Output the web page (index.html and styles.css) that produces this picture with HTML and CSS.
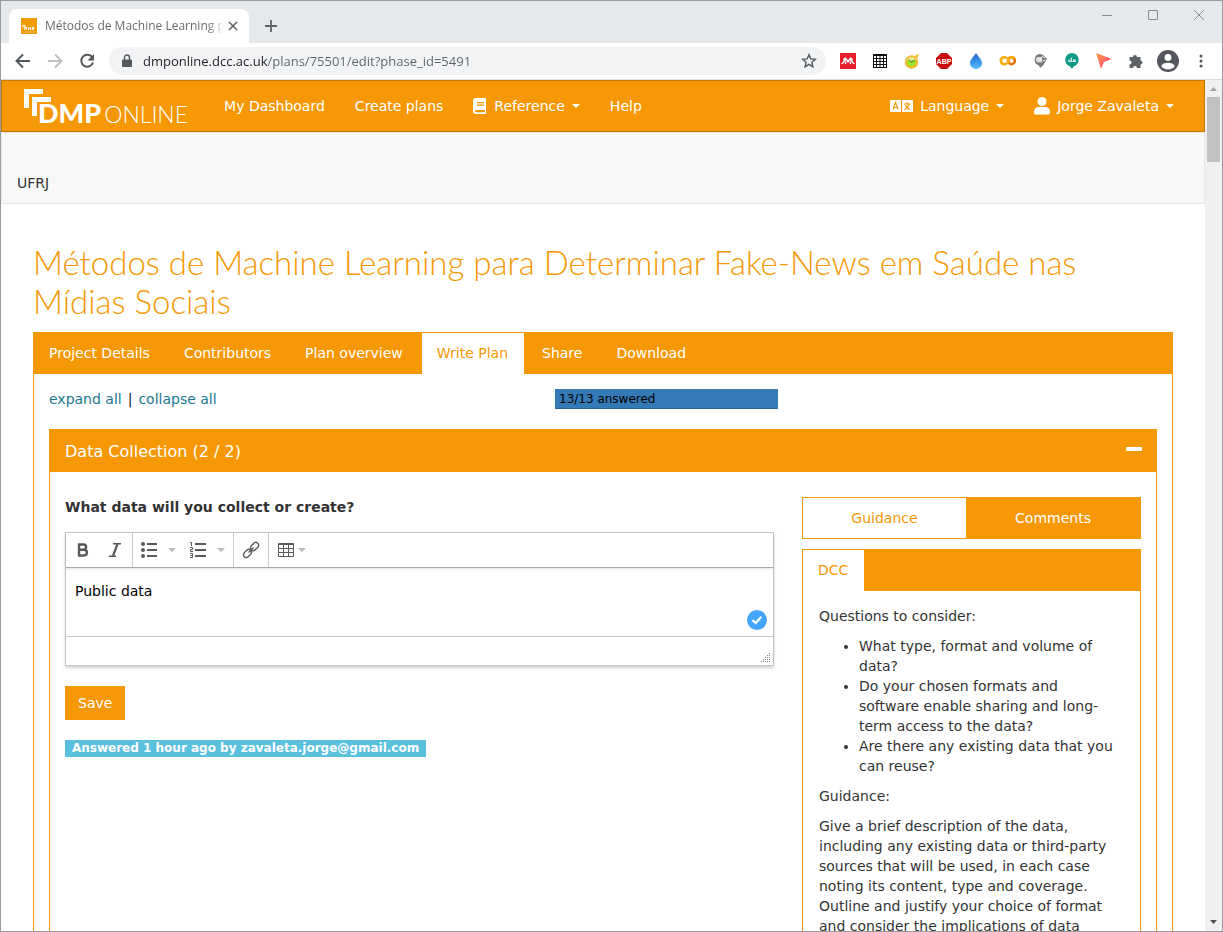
FILE: index.html
```html
<!DOCTYPE html>
<html lang="pt">
<head>
<meta charset="utf-8">
<title>Métodos de Machine Learning para Determinar Fake-News</title>
<link rel="stylesheet" href="styles.css">
</head>
<body>
<div class="window">
  <header class="tabstrip">
    <div class="browser-tab">
      <svg class="favicon" width="16" height="16" viewBox="0 0 16 16"><path fill="#ee9b00" d="M0 0h16v16H0z"/><path d="M1.500 9V7.500h3M3 10.500V9h2M4 12V9.500h1.500v2M7.500 12V9.500l1 1.500 1-1.500V12M11.500 12V9.500h1.500V11h-1.500" fill="none" stroke="#fff" stroke-width="1"/><path d="M4 14h10" stroke="#f8cf85" stroke-dasharray="2 .6"/></svg>
      <span class="browser-tab-title">Métodos de Machine Learning pa</span>
      <button class="plain" aria-label="Close tab"><svg width="10" height="10" viewBox="0 0 10 10"><path d="M1 1l8 8M9 1L1 9" stroke="#5f6368" stroke-width="1.600"/></svg></button>
    </div>
    <button class="plain new-tab" aria-label="New tab"><svg width="14" height="14" viewBox="0 0 14 14"><path d="M7 1v12M1 7h12" stroke="#5f6368" stroke-width="1.800"/></svg></button>
    <div class="window-controls">
      <button class="plain" aria-label="Minimize"><svg width="12" height="12" viewBox="0 0 12 12"><path d="M1 6.500h10" stroke="#8a8d91"/></svg></button>
      <button class="plain" aria-label="Maximize"><svg width="12" height="12" viewBox="0 0 12 12"><path d="M1.500 1.500h9v9h-9z" fill="none" stroke="#8a8d91"/></svg></button>
      <button class="plain" aria-label="Close"><svg width="12" height="12" viewBox="0 0 12 12"><path d="M1 1l10 10M11 1L1 11" stroke="#8a8d91"/></svg></button>
    </div>
  </header>

  <div class="toolbar">
    <div class="history">
      <button class="plain" aria-label="Back"><svg width="16" height="16" viewBox="0 0 16 16"><path d="M15 8H2M8 1.500L1.500 8 8 14.500" fill="none" stroke="#54575b" stroke-width="2"/></svg></button>
      <button class="plain" aria-label="Forward"><svg width="16" height="16" viewBox="0 0 16 16"><path d="M1 8h13M8 1.500L14.500 8 8 14.500" fill="none" stroke="#bcbec0" stroke-width="2"/></svg></button>
      <button class="plain" aria-label="Reload"><svg width="16" height="16" viewBox="0 0 16 16"><path d="M13.200 4.200A6 6 0 1 0 14 9.500" fill="none" stroke="#54575b" stroke-width="2"/><path d="M15 1v6.500H8.500z" fill="#54575b"/></svg></button>
    </div>
    <div class="address">
      <svg width="10" height="14" viewBox="0 0 10 14"><path d="M1 5.500h8a1 1 0 0 1 1 1V12a1 1 0 0 1-1 1H1a1 1 0 0 1-1-1V6.500a1 1 0 0 1 1-1z" fill="#54575b"/><path d="M2.500 6V3.500a2.500 2.500 0 0 1 5 0V6" fill="none" stroke="#54575b" stroke-width="1.400"/></svg>
      <input type="text" aria-label="Address" value="dmponline.dcc.ac.uk/plans/75501/edit?phase_id=5491">
      <button class="plain" aria-label="Bookmark"><svg width="16" height="16" viewBox="0 0 16 16"><path d="M8 1.800l1.800 4.100 4.500.4-3.400 3 1 4.400L8 11.400l-3.900 2.300 1-4.400-3.400-3 4.500-.4z" fill="none" stroke="#54575b" stroke-width="1.400"/></svg></button>
    </div>
    <div class="extensions">
      <svg width="16" height="16" viewBox="0 0 16 16"><path fill="#e61f2e" d="M0 0h16v16H0z"/><g fill="#fff"><circle cx="5.200" cy="6.300" r="1.800"/><circle cx="10.800" cy="6.300" r="1.800"/><circle cx="8" cy="8" r="1.500"/></g><path d="M1.500 10.500c2.500.3 1.500-3 3.500-3M14.500 10.500c-2.500.3-1.500-3-3.500-3M5.500 11V8.500M10.500 11V8.500" fill="none" stroke="#fff" stroke-width="1.400"/></svg>
      <svg width="16" height="16" viewBox="0 0 16 16"><path fill="#111" d="M1 1h14v14H1z"/><g fill="#fff"><path d="M2 3h2v2H2zM5 3h2.500v2H5zM8.500 3H11v2H8.500zM12 3h2v2h-2zM2 6h2v2H2zM5 6h2.500v2H5zM8.500 6H11v2H8.500zM12 6h2v2h-2zM2 9h2v2H2zM5 9h2.500v2H5zM8.500 9H11v2H8.500zM12 9h2v2h-2zM2 12h2v2H2zM5 12h2.500v2H5zM8.500 12H11v2H8.500zM12 12h2v2h-2z"/></g></svg>
      <svg width="16" height="16" viewBox="0 0 16 16"><path d="M11 3l3.500-1.500L13 5" fill="#f5c23b" stroke="#f5c23b"/><circle cx="7.500" cy="9" r="5.600" fill="#9be52a" stroke="#f3b82c" stroke-width="2.200"/><path d="M4.500 6l3 3 3.500-2.500" fill="none" stroke="#5c6b12" stroke-width="1.100"/><path d="M3 6.500a5 5 0 0 1 9 0l-4.500 2z" fill="#f4f7c8" opacity=".6"/></svg>
      <svg class="wide" width="18" height="16" viewBox="0 0 18 16"><path d="M6 0h6l5 5v6l-5 5H6l-5-5V5z" fill="#c70d0d"/><text class="abp" x="9" y="11" text-anchor="middle">ABP</text></svg>
      <svg width="16" height="16" viewBox="0 0 16 16"><defs><linearGradient id="drop" x2="0" y2="1"><stop stop-color="#1d62cf"/><stop offset="1" stop-color="#4fc0f8"/></linearGradient></defs><path d="M8 0c2 3.500 6 6.500 6 10.200A5.900 5.900 0 0 1 8 16a5.900 5.900 0 0 1-6-5.800C2 6.500 6 3.500 8 0z" fill="url(#drop)"/></svg>
      <svg class="wide" width="18" height="16" viewBox="0 0 18 16"><path d="M8 5.500A3.500 3.500 0 1 0 8 10" fill="none" stroke="#f9ab00" stroke-width="2.600"/><circle cx="12.500" cy="7.800" r="3.400" fill="none" stroke="#e8710a" stroke-width="2.600"/><path d="M10 10.200a3.400 3.400 0 0 1 4.900-4.800" fill="none" stroke="#f9ab00" stroke-width="2.600"/></svg>
      <svg width="16" height="16" viewBox="0 0 16 16"><path d="M7.500 1C10 1 11 2 12 3l3 3-2 3c-1 3-3 4-5 6l-1-2.500A5.900 5.900 0 0 1 7.500 1z" fill="#777"/><path d="M10 4H6.500a2.700 2.700 0 0 0 0 5.500H10z" fill="#ddd"/><path d="M7 6.500h3M10 3.500l2.500 1M10.500 8l3-1" stroke="#fff"/></svg>
      <svg width="16" height="16" viewBox="0 0 16 16"><path d="M8 0a6.800 6.800 0 0 1 1.500 13.400L8 16l-2-2.700A6.800 6.800 0 0 1 8 0z" fill="#0a9888"/><path d="M4 9V7l2-1 2-2 1 2 3 1v2H4z" fill="#c8ebe6"/><path d="M6 6v2M8.500 5v3" stroke="#0a9888"/></svg>
      <svg width="16" height="16" viewBox="0 0 16 16"><defs><linearGradient id="ptr" x2="1" y2="1"><stop stop-color="#ffa03a"/><stop offset="1" stop-color="#f7378c"/></linearGradient></defs><path d="M0 0l16 6-8 3-3 7z" fill="url(#ptr)"/></svg>
      <svg width="16" height="16" viewBox="0 0 16 16"><path d="M1.500 4H5a2 2 0 1 1 4 0h3.500v3.500a2 2 0 0 1 0 4V15H9a2 2 0 0 0-4 0H1.500v-3.500a2 2 0 0 0 0-4z" fill="#5f6368"/></svg>
      <svg class="avatar" width="22" height="22" viewBox="0 0 22 22"><circle cx="11" cy="11" r="11" fill="#54575d"/><circle cx="11" cy="7.500" r="3.400" fill="#fff"/><path d="M4.200 16.200c1.300-4.600 12.300-4.600 13.600 0-3 4.200-10.600 4.200-13.600 0z" fill="#fff"/></svg>
      <svg class="menu" width="4" height="14" viewBox="0 0 4 14"><g fill="#54575b"><circle cx="2" cy="2" r="1.500"/><circle cx="2" cy="7" r="1.500"/><circle cx="2" cy="12" r="1.500"/></g></svg>
    </div>
  </div>

  <div class="viewport">
    <div class="page">
      <nav class="navbar">
        <a class="logo" href="#">
          <svg class="logo-mark" width="28" height="28" viewBox="0 0 28 28"><path d="M0 0h19v5H5v14H0zM8 8h19v5H13v14H8z" fill="#fff"/></svg>
          <span class="logo-bold">DMP</span><span class="logo-thin">ONLINE</span>
        </a>
        <a href="#">My Dashboard</a>
        <a href="#">Create plans</a>
        <a href="#"><svg class="nav-icon" width="14" height="16" viewBox="0 0 14 16"><path d="M3 0h10v16H3a3 3 0 0 1-3-3V3a3 3 0 0 1 3-3zm0 12a1 1 0 0 0 0 2.200h9V12zM4 4v1.200h7V4zm0 2.500v1.200h7V6.500z" fill="#fff" fill-rule="evenodd"/></svg>Reference<span class="caret"></span></a>
        <a href="#">Help</a>
        <a class="nav-right" href="#"><svg class="nav-icon" width="23" height="12" viewBox="0 0 23 12"><path d="M1 0h21a1 1 0 0 1 1 1v10a1 1 0 0 1-1 1H1a1 1 0 0 1-1-1V1a1 1 0 0 1 1-1z" fill="#fff"/><path d="M11.500 0v12M3 9.500l2.500-7 2.500 7M4 7.500h3M14 4h6.500M17.200 2v2M19 4.500c-.5 2-2 4-4.500 5M15.500 5c.5 2 2 3.500 4.500 4.500" fill="none" stroke="#f69803" stroke-width="1.100"/></svg>Language<span class="caret"></span></a>
        <a href="#"><svg class="nav-icon" width="16" height="18" viewBox="0 0 16 18"><circle cx="8" cy="4.500" r="4.500" fill="#fff"/><path d="M4.500 10h7a4.500 4.500 0 0 1 4.500 4.500V16a1.500 1.500 0 0 1-1.500 1.500h-13A1.500 1.500 0 0 1 0 16v-1.500A4.500 4.500 0 0 1 4.500 10z" fill="#fff"/></svg>Jorge Zavaleta<span class="caret"></span></a>
      </nav>
      <div class="org-bar">UFRJ</div>

      <main class="content">
        <h1>Métodos de Machine Learning para Determinar Fake-News em Saúde nas Mídias Sociais</h1>
        <nav class="tabs">
          <a href="#">Project Details</a>
          <a href="#">Contributors</a>
          <a href="#">Plan overview</a>
          <a href="#" class="active">Write Plan</a>
          <a href="#">Share</a>
          <a href="#">Download</a>
        </nav>
        <div class="tab-panel">
          <div class="summary">
            <div class="toggles"><a href="#">expand all</a><span>|</span><a href="#">collapse all</a></div>
            <div class="progress">13/13 answered</div>
          </div>
          <section class="section">
            <h2 class="section-head">Data Collection (2 / 2)
              <button class="plain" aria-label="Collapse"><svg width="16" height="4" viewBox="0 0 16 4"><rect width="16" height="4" rx="1" fill="#fff"/></svg></button>
            </h2>
            <div class="section-body">
              <form class="question">
                <label for="answer">What data will you collect or create?</label>
                <div class="editor">
                  <div class="editor-tools">
                    <div class="group">
                      <button type="button" class="plain" aria-label="Bold"><svg width="12" height="14" viewBox="0 0 12 14"><path d="M2 1.500h4.500a2.500 2.500 0 0 1 0 5.200H2zM2 6.700h5a2.800 2.800 0 0 1 0 5.800H2z" fill="none" stroke="#595959" stroke-width="2.400"/></svg></button>
                      <button type="button" class="plain" aria-label="Italic"><svg width="12" height="14" viewBox="0 0 12 14"><path d="M4 .8h8M0 13.200h7" stroke="#595959" stroke-width="1.400"/><path d="M8.500 1L4 13" stroke="#595959" stroke-width="2.200"/></svg></button>
                    </div>
                    <div class="group lists">
                      <button type="button" class="plain" aria-label="Bullet list"><svg width="16" height="16" viewBox="0 0 16 16"><g fill="#595959"><circle cx="2" cy="2" r="2"/><circle cx="2" cy="8" r="2"/><circle cx="2" cy="14" r="2"/><path d="M6 1h10v2H6zM6 7h10v2H6zM6 13h10v2H6z"/></g></svg><span class="caret pale"></span></button>
                      <button type="button" class="plain" aria-label="Numbered list"><svg width="16" height="16" viewBox="0 0 16 16"><path d="M5 1h11v2H5zM5 7h11v2H5zM5 13h11v2H5z" fill="#595959"/><path d="M0 .5h1.500V4M0 5.500h2.500v2H.5v2H3M0 11.500h2.500v4H0M.5 13.500h2" fill="none" stroke="#595959"/></svg><span class="caret pale"></span></button>
                    </div>
                    <div class="group single">
                      <button type="button" class="plain" aria-label="Link"><svg width="16" height="16" viewBox="0 0 16 16"><g fill="none" stroke="#595959" stroke-width="1.400" transform="rotate(-45 8 8)"><rect x="-1.500" y="5.200" width="9" height="5.600" rx="2.800"/><rect x="8.500" y="5.200" width="9" height="5.600" rx="2.800"/><path d="M4.500 8h7"/></g></svg></button>
                    </div>
                    <div class="group table-tools">
                      <button type="button" class="plain" aria-label="Table"><svg width="16" height="14" viewBox="0 0 16 14"><path d="M.5.500h15v13H.5zM0 1.500h16M0 5.500h16M0 9.500h16M5.500 1v13M10.500 1v13" fill="none" stroke="#595959"/></svg><span class="caret pale"></span></button>
                    </div>
                  </div>
                  <div class="editor-area">
                    <textarea id="answer">Public data</textarea>
                    <svg class="check" width="20" height="20" viewBox="0 0 20 20"><circle cx="10" cy="10" r="10" fill="#44a5fc"/><path d="M5.500 10.200L8.700 13l5.600-6.200" fill="none" stroke="#fff" stroke-width="2.200"/></svg>
                  </div>
                  <div class="editor-status"><svg width="10" height="10" viewBox="0 0 10 10"><path d="M8 1.500h2M6 3.500h4M4 5.500h6M2 7.500h8M0 9.500h10" stroke="#7e8489" stroke-dasharray="1 1"/></svg></div>
                </div>
                <button type="button" class="save">Save</button>
                <div class="answered">Answered 1 hour ago by zavaleta.jorge@gmail.com</div>
              </form>
              <aside class="help">
                <nav class="help-tabs">
                  <a href="#" class="active">Guidance</a>
                  <a href="#">Comments</a>
                </nav>
                <nav class="tabs source-tabs"><a href="#" class="active">DCC</a></nav>
                <div class="guidance">
                  <p>Questions to consider:</p>
                  <ul>
                    <li>What type, format and volume of data?</li>
                    <li>Do your chosen formats and software enable sharing and long-term access to the data?</li>
                    <li>Are there any existing data that you can reuse?</li>
                  </ul>
                  <p>Guidance:</p>
                  <p>Give a brief description of the data, including any existing data or third-party sources that will be used, in each case noting its content, type and coverage. Outline and justify your choice of format and consider the implications of data</p>
                </div>
              </aside>
            </div>
          </section>
        </div>
      </main>
    </div>
    <div class="scrollbar">
      <svg width="7" height="4" viewBox="0 0 7 4"><path d="M0 4h7L3.500 0z" fill="#a3a3a3"/></svg>
      <div class="thumb"></div>
      <svg class="down" width="7" height="4" viewBox="0 0 7 4"><path d="M0 0h7L3.500 4z" fill="#505050"/></svg>
    </div>
  </div>
</div>
</body>
</html>
```
FILE: styles.css
```css
* { box-sizing: border-box; }
body {
  margin: 0;
  color: #333;
  font: 14px/20px "DejaVu Sans", Verdana, sans-serif;
}
a { text-decoration: none; }
svg { display: block; flex: none; overflow: visible; }
.plain {
  display: flex;
  align-items: center;
  justify-content: center;
  padding: 0;
  border: 0;
  background: none;
}
.window {
  display: flex;
  flex-direction: column;
  height: 100vh;
  overflow: hidden;
  border: 1px solid #9b9c9f;
  background: #fff;
}

/* Browser frame */
.tabstrip {
  display: flex;
  align-items: center;
  height: 42px;
  flex: none;
  padding-left: 8px;
  background: #e5e9ec;
}
.browser-tab {
  display: flex;
  align-items: center;
  align-self: flex-end;
  width: 240px;
  height: 34px;
  padding: 0 11px 0 12px;
  border-radius: 8px 8px 0 0;
  background: #fff;
}
.browser-tab-title {
  flex: 1;
  min-width: 0;
  margin-left: 8px;
  white-space: nowrap;
  color: transparent;
  font: 12px/18px "Open Sans", sans-serif;
  background: linear-gradient(90deg, #5f6368 162px, #5f636800 180px);
  -webkit-background-clip: text;
  background-clip: text;
}
.new-tab { margin: 8px 0 0 15px; }
.window-controls {
  display: flex;
  gap: 34px;
  margin: 0 17px 14px auto;
}
.toolbar {
  display: flex;
  align-items: center;
  flex: none;
  height: 37px;
  padding: 0 19px 0 14px;
  border-bottom: 1px solid #d9dbde;
}
.history { display: flex; gap: 16px; }
.address {
  display: flex;
  align-items: center;
  flex: 1;
  height: 28px;
  margin: 0 14px;
  padding: 0 9px 0 13px;
  border-radius: 14px;
  background: #f1f3f4;
}
.address input {
  flex: 1;
  min-width: 0;
  margin-left: 11px;
  padding: 0;
  border: 0;
  outline: 0;
  color: transparent;
  font: 13px/20px "Open Sans", sans-serif;
  background: linear-gradient(90deg, #202124 124px, #5f6368 124px);
  -webkit-background-clip: text;
  background-clip: text;
}
.extensions {
  display: flex;
  align-items: center;
  gap: 16px;
}
.wide { margin: 0 -1px; }
.avatar { margin: 0 -3px; }
.menu { margin-left: 7px; }
.abp { fill: #fff; font: bold 7px "Liberation Sans", sans-serif; }

/* Page and scrollbar */
.viewport { display: flex; flex: 1; min-height: 0; }
.page { flex: 1; min-width: 0; overflow: hidden; }
.scrollbar {
  display: flex;
  flex-direction: column;
  align-items: center;
  width: 17px;
  padding: 7px 0;
  background: #f0f0f0;
}
.thumb { width: 13px; height: 65px; margin-top: 6px; background: #c1c1c1; }
.down { margin-top: auto; }

.navbar {
  display: flex;
  align-items: center;
  gap: 30px;
  height: 52px;
  padding: 0 30px 0 22px;
  border: 1px solid #c27801;
  background: #f69803;
}
.navbar a { display: flex; align-items: center; color: #fff; }
.navbar .nav-right { margin-left: auto; }
.nav-icon { margin-right: 7px; }
.caret {
  margin-left: 7px;
  border: 4px solid transparent;
  border-top-color: currentColor;
  border-bottom: 0;
}
.caret.pale { margin: 0; color: #b5bcc2; }
.navbar .logo {
  position: relative;
  align-items: baseline;
  gap: 3px;
  margin-right: 6px;
  padding: 14px 0 0 14px;
  font-family: Lato, sans-serif;
  line-height: 24px;
}
.logo-mark { position: absolute; left: 0; top: 2px; }
.logo-bold { font-size: 27px; font-weight: 900; }
.logo-thin { font-size: 23px; font-weight: 300; }
.org-bar {
  height: 72px;
  padding: 40px 15px 0;
  border: 1px solid #e7e7e7;
  background: #f8f8f8;
}
.content { padding: 39px 32px 0; }
h1 {
  margin: 0 0 11px;
  color: #f69803;
  font: 300 33px/39px Lato, sans-serif;
}

/* Tabs */
.tabs {
  display: flex;
  gap: 3px;
  border: 1px solid #f69803;
  border-bottom: 0;
  background: #f69803;
}
.tabs a { padding: 10px 16px 11px 15px; color: #fff; }
.tabs .active, .help-tabs .active { color: #f69803; background: #fff; }
.tab-panel {
  height: 900px;
  padding: 15px;
  border: 1px solid #f69803;
  border-top: 0;
}
.summary {
  display: grid;
  grid-template-columns: 506fr 223fr 379fr;
  margin-bottom: 20px;
  color: #111;
}
.toggles { display: flex; gap: 6px; }
.summary a { color: #1b7891; }
.progress {
  padding-left: 4px;
  color: #000;
  font-size: 12px;
  background: #337ab7;
  box-shadow: inset 0 -1px rgba(0, 0, 0, .15);
}

/* Question section */
.section { height: 800px; border: 1px solid #f69803; }
.section-head {
  display: flex;
  align-items: center;
  justify-content: space-between;
  margin: 0;
  padding: 12px 14px 10px 15px;
  color: #fff;
  font-size: 16px;
  font-weight: normal;
  background: #f69803;
}
.section-head .plain { margin-bottom: 6px; }
.section-body {
  display: grid;
  grid-template-columns: 709fr 339fr;
  column-gap: 28px;
  padding: 25px 15px;
}
.question { min-width: 0; }
.question label { display: block; margin-bottom: 15px; font-weight: bold; }
.editor { border: 1px solid #c4c4c4; box-shadow: 0 2px 3px rgba(0, 0, 0, .18); }
.editor-tools {
  display: flex;
  height: 35px;
  border-bottom: 1px solid #aaa;
  box-shadow: 0 1px 2px rgba(0, 0, 0, .12);
}
.group { display: flex; justify-content: space-around; width: 67px; padding: 0 1px; border-right: 1px solid #ccc; }
.lists { width: 101px; }
.lists .plain { gap: 11px; }
.single { width: 35px; }
.table-tools { width: 45px; border: 0; }
.table-tools .plain { gap: 4px; }
.editor-area { position: relative; }
.editor textarea {
  display: block;
  width: 100%;
  height: 68px;
  padding: 13px 9px;
  border: 0;
  resize: none;
  color: #000;
  font: inherit;
  background: none;
}
.check { position: absolute; right: 6px; bottom: 6px; }
.editor-status {
  display: flex;
  align-items: flex-end;
  justify-content: flex-end;
  height: 29px;
  padding: 3px 2px;
  border-top: 1px solid #c4c4c4;
}
.save {
  display: block;
  margin: 20px 0;
  padding: 7px 13px;
  border: 0;
  color: #fff;
  font: inherit;
  background: #f69803;
}
.answered {
  width: max-content;
  padding: 0 7px;
  color: #fff;
  font-size: 12px;
  font-weight: bold;
  line-height: 17px;
  background: #5bc0de;
}
.help-tabs {
  display: grid;
  grid-template-columns: 163fr 174fr;
  margin-bottom: 10px;
  border: 1px solid #f69803;
  background: #f69803;
}
.help-tabs a { padding: 10px 0; color: #fff; text-align: center; }
.guidance { padding: 15px 24px 0 16px; border: solid #f69803; border-width: 0 1px; height: 900px; }
.guidance p, .guidance ul { margin: 0 0 10px; }
```
